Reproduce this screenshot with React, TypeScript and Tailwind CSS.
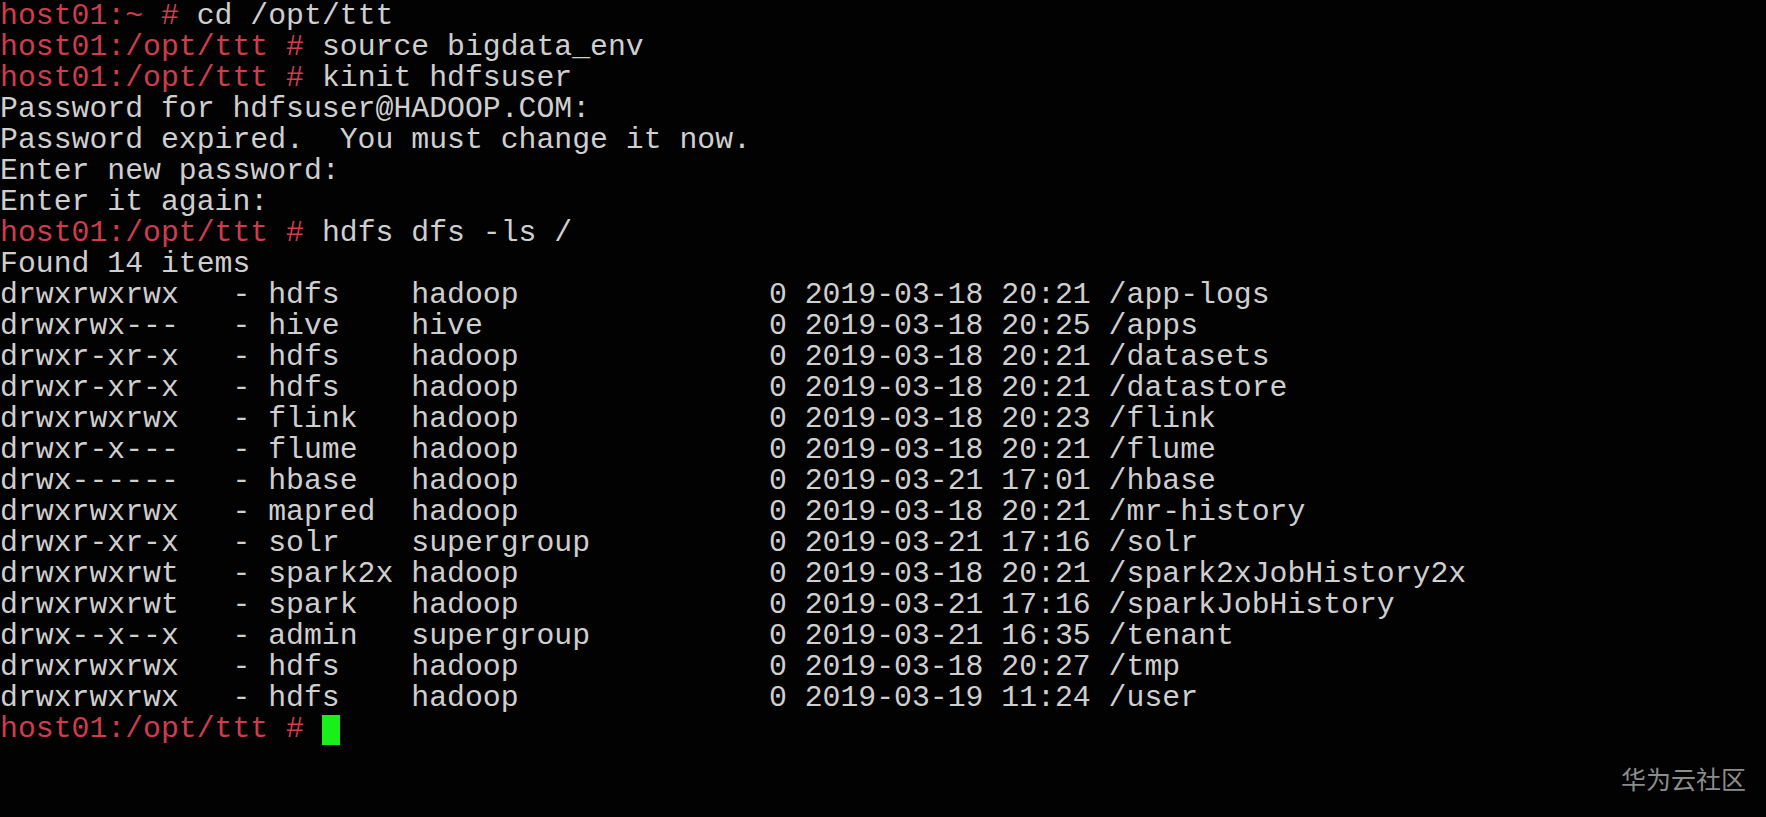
const rows = [
  ["drwxrwxrwx", "hdfs", "hadoop", "2019-03-18 20:21", "/app-logs"],
  ["drwxrwx---", "hive", "hive", "2019-03-18 20:25", "/apps"],
  ["drwxr-xr-x", "hdfs", "hadoop", "2019-03-18 20:21", "/datasets"],
  ["drwxr-xr-x", "hdfs", "hadoop", "2019-03-18 20:21", "/datastore"],
  ["drwxrwxrwx", "flink", "hadoop", "2019-03-18 20:23", "/flink"],
  ["drwxr-x---", "flume", "hadoop", "2019-03-18 20:21", "/flume"],
  ["drwx------", "hbase", "hadoop", "2019-03-21 17:01", "/hbase"],
  ["drwxrwxrwx", "mapred", "hadoop", "2019-03-18 20:21", "/mr-history"],
  ["drwxr-xr-x", "solr", "supergroup", "2019-03-21 17:16", "/solr"],
  ["drwxrwxrwt", "spark2x", "hadoop", "2019-03-18 20:21", "/spark2xJobHistory2x"],
  ["drwxrwxrwt", "spark", "hadoop", "2019-03-21 17:16", "/sparkJobHistory"],
  ["drwx--x--x", "admin", "supergroup", "2019-03-21 16:35", "/tenant"],
  ["drwxrwxrwx", "hdfs", "hadoop", "2019-03-18 20:27", "/tmp"],
  ["drwxrwxrwx", "hdfs", "hadoop", "2019-03-19 11:24", "/user"],
];

function Prompt({ dir, cmd }: { dir: string; cmd?: string }) {
  return (
    <div>
      <span className="text-[#cf3c4c]">host01:{dir} #</span> {cmd}
    </div>
  );
}

export default function App() {
  return (
    <div className="relative w-[1766px] h-[817px] overflow-hidden bg-[#020202]">
      <div className="pt-[1px] font-['Liberation_Mono','Courier_New',monospace] text-[29.8px] leading-[31px] text-[#cfcfcf] whitespace-pre">
        <Prompt dir="~" cmd="cd /opt/ttt" />
        <Prompt dir="/opt/ttt" cmd="source bigdata_env" />
        <Prompt dir="/opt/ttt" cmd="kinit hdfsuser" />
        <div>Password for hdfsuser@HADOOP.COM:</div>
        <div>Password expired.  You must change it now.</div>
        <div>Enter new password:</div>
        <div>Enter it again:</div>
        <Prompt dir="/opt/ttt" cmd="hdfs dfs -ls /" />
        <div>Found 14 items</div>
        {rows.map((r) => (
          <div key={r[4]}>
            {`${r[0]}   - ${r[1].padEnd(8)}${r[2].padEnd(20)}0 ${r[3]} ${r[4]}`}
          </div>
        ))}
        <div className="flex items-center">
          <span className="text-[#cf3c4c]">host01:/opt/ttt #</span>
          <span> </span>
          <span className="inline-block w-[18px] h-[30px] bg-[#19f019]" />
        </div>
      </div>
      <div className="absolute right-[20px] bottom-[26px] font-['Noto_Sans_CJK_SC',sans-serif] text-[25px] leading-none text-[#8c8c8c]">
        华为云社区
      </div>
    </div>
  );
}
